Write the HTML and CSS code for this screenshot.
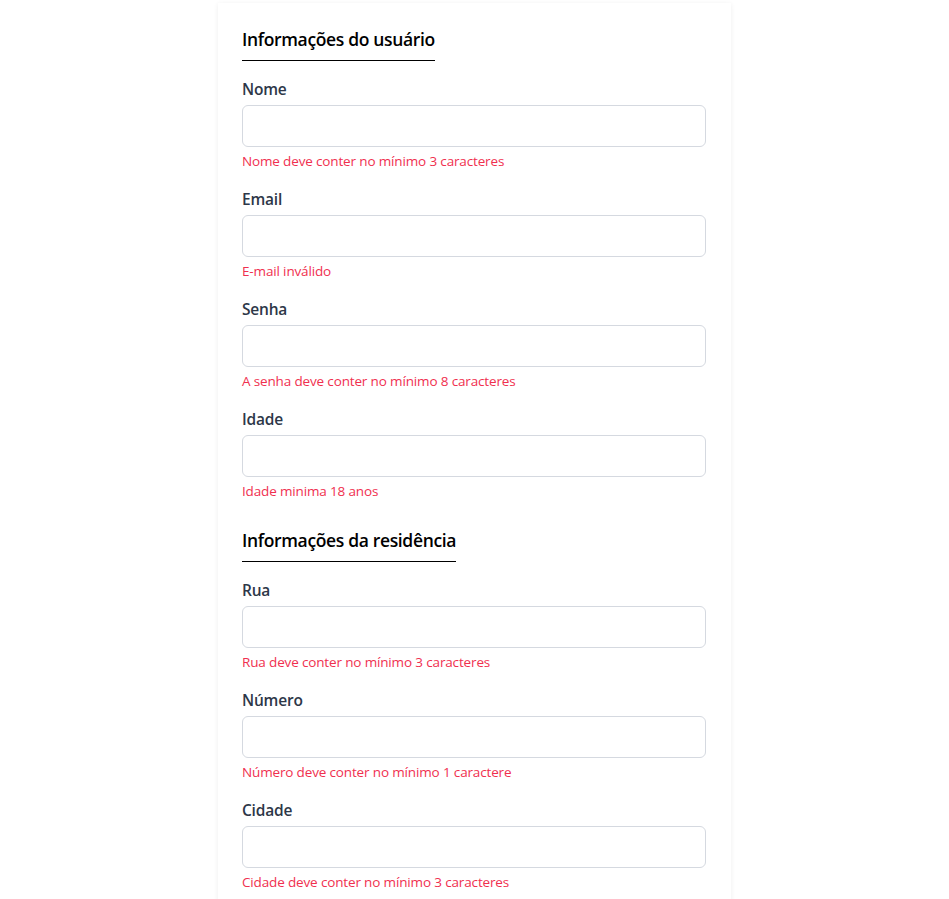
FILE: index.html
```html
<!DOCTYPE html>
<html lang="pt-BR">
<head>
<meta charset="utf-8">
<title>Formulário</title>
<link rel="stylesheet" href="styles.css">
</head>
<body>
<main class="card">
  <form class="form">
    <h2 class="section-title">Informações do usuário</h2>
    <div class="field">
      <label class="label">Nome</label>
      <input class="input" type="text">
      <p class="error">Nome deve conter no mínimo 3 caracteres</p>
    </div>
    <div class="field">
      <label class="label">Email</label>
      <input class="input" type="text">
      <p class="error">E-mail inválido</p>
    </div>
    <div class="field">
      <label class="label">Senha</label>
      <input class="input" type="password">
      <p class="error">A senha deve conter no mínimo 8 caracteres</p>
    </div>
    <div class="field">
      <label class="label">Idade</label>
      <input class="input" type="text">
      <p class="error">Idade minima 18 anos</p>
    </div>
    <h2 class="section-title second">Informações da residência</h2>
    <div class="field">
      <label class="label">Rua</label>
      <input class="input" type="text">
      <p class="error">Rua deve conter no mínimo 3 caracteres</p>
    </div>
    <div class="field">
      <label class="label">Número</label>
      <input class="input" type="text">
      <p class="error">Número deve conter no mínimo 1 caractere</p>
    </div>
    <div class="field">
      <label class="label">Cidade</label>
      <input class="input" type="text">
      <p class="error">Cidade deve conter no mínimo 3 caracteres</p>
    </div>
  </form>
</main>
</body>
</html>
```
FILE: styles.css
```css
* { box-sizing: border-box; }
html, body { margin: 0; padding: 0; background: #ffffff; }
body {
  font-family: "Open Sans", "Noto Sans", sans-serif;
  color: #1a202c;
}
.card {
  width: 513px;
  margin: 3px auto 0;
  padding: 24px 25px 40px 24px;
  background: #fff;
  box-shadow: 0 1px 5px rgba(0, 0, 0, 0.07);
}
.form { display: flex; flex-direction: column; align-items: flex-start; }
.section-title {
  display: inline-block;
  margin: 0 0 16px;
  padding-bottom: 8px;
  font-size: 17.5px;
  line-height: 25px;
  font-weight: 600;
  letter-spacing: -0.35px;
  color: #000;
  border-bottom: 1px solid #000;
}
.section-title.second { margin-top: 11px; }
.field {
  width: 100%;
  display: flex;
  flex-direction: column;
  margin-bottom: 16px;
}
.label {
  font-size: 15.5px;
  line-height: 24px;
  font-weight: 600;
  letter-spacing: -0.2px;
  color: #2d3748;
  margin-bottom: 4px;
}
.input {
  width: 100%;
  height: 42px;
  border: 1px solid #d5d9e0;
  border-radius: 6px;
  background: #fff;
  font: inherit;
  padding: 0 16px;
  outline: none;
}
.error {
  margin: 4px 0 0;
  font-size: 13.5px;
  line-height: 20px;
  letter-spacing: -0.15px;
  color: #f0304f;
}
```
